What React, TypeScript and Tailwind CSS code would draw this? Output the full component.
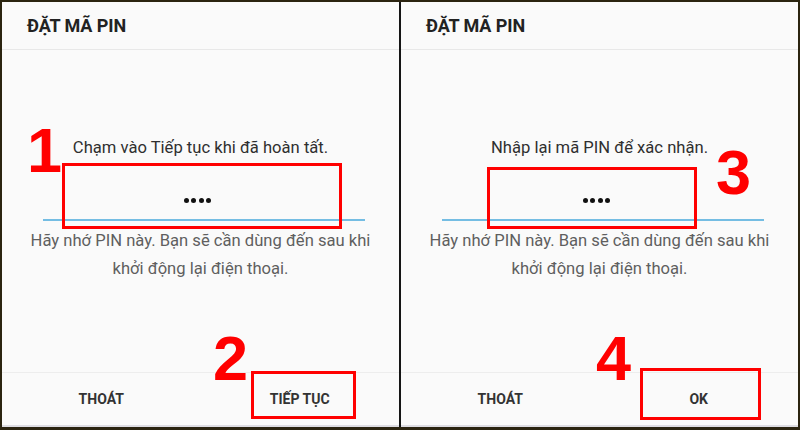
import React from 'react';

interface PanelProps {
  prompt: string;
  confirmLabel: string;
}

function PinPanel({ prompt, confirmLabel }: PanelProps) {
  return (
    <div className="flex h-full flex-1 flex-col bg-[#fafafa]">
      {/* Tiêu đề */}
      <div className="flex h-[48px] items-center border-b border-[#e8e8e8] pl-[25px]">
        <span className="text-[18px] font-bold tracking-[-0.1px] text-[#222]">ĐẶT MÃ PIN</span>
      </div>

      {/* Nội dung */}
      <div className="flex flex-1 flex-col">
        <div className="mt-[88px] text-center text-[16.6px] leading-[20px] text-[#2f2f2f]">{prompt}</div>

        <div className="mt-[32px] flex h-[20px] items-center justify-center gap-[2.5px] pr-[6px]">
          {[0, 1, 2, 3].map((i) => (
            <span key={i} className="h-[5px] w-[5px] rounded-full bg-[#111]" />
          ))}
        </div>
        <div className="ml-[41px] mr-[34px] mt-[9px] h-[2px] bg-[#74bde3]" />

        <div className="mt-[6px] text-center text-[16.6px] leading-[28px] text-[#5f5f5f]">
          Hãy nhớ PIN này. Bạn sẽ cần dùng đến sau khi
          <br />
          khởi động lại điện thoại.
        </div>
      </div>

      {/* Nút */}
      <div className="flex h-[53px] border-t border-[#ededed]">
        <button className="flex flex-1 items-center justify-center text-[14px] font-bold text-[#333]">THOÁT</button>
        <button className="flex flex-1 items-center justify-center text-[14px] font-bold text-[#333]">{confirmLabel}</button>
      </div>
      <div className="h-[2px] bg-[#dedde3]" />
    </div>
  );
}

export default function App() {
  return (
    <div
      className="relative flex h-[430px] w-[800px] bg-[#2b2410] pb-[3px] pl-[2px] pr-[2px] pt-[2px]"
      style={{ fontFamily: 'Roboto, "Noto Sans", sans-serif' }}
    >
      <PinPanel prompt="Chạm vào Tiếp tục khi đã hoàn tất." confirmLabel="TIẾP TỤC" />
      <div className="h-full w-[2px] bg-[#151515]" />
      <PinPanel prompt="Nhập lại mã PIN để xác nhận." confirmLabel="OK" />

      {/* Chú thích màu đỏ */}
      <div className="pointer-events-none absolute left-[62px] top-[163px] h-[66px] w-[280px] border-[3px] border-[#ff0000]" />
      <div className="pointer-events-none absolute left-[251px] top-[371px] h-[48px] w-[105px] border-[3px] border-[#ff0000]" />
      <div className="pointer-events-none absolute left-[487px] top-[167px] h-[62px] w-[210px] border-[3px] border-[#ff0000]" />
      <div className="pointer-events-none absolute left-[640px] top-[368px] h-[52px] w-[121px] border-[3px] border-[#ff0000]" />

      <span
        className="absolute left-[27px] top-[119px] text-[63px] font-bold leading-none text-[#ff0000]"
        style={{ fontFamily: '"Liberation Sans", Arial, sans-serif' }}
      >
        1
      </span>
      <span
        className="absolute left-[213px] top-[327px] text-[63px] font-bold leading-none text-[#ff0000]"
        style={{ fontFamily: '"Liberation Sans", Arial, sans-serif' }}
      >
        2
      </span>
      <span
        className="absolute left-[716px] top-[141px] text-[63px] font-bold leading-none text-[#ff0000]"
        style={{ fontFamily: '"Liberation Sans", Arial, sans-serif' }}
      >
        3
      </span>
      <span
        className="absolute left-[596px] top-[327px] text-[63px] font-bold leading-none text-[#ff0000]"
        style={{ fontFamily: '"Liberation Sans", Arial, sans-serif' }}
      >
        4
      </span>
    </div>
  );
}
